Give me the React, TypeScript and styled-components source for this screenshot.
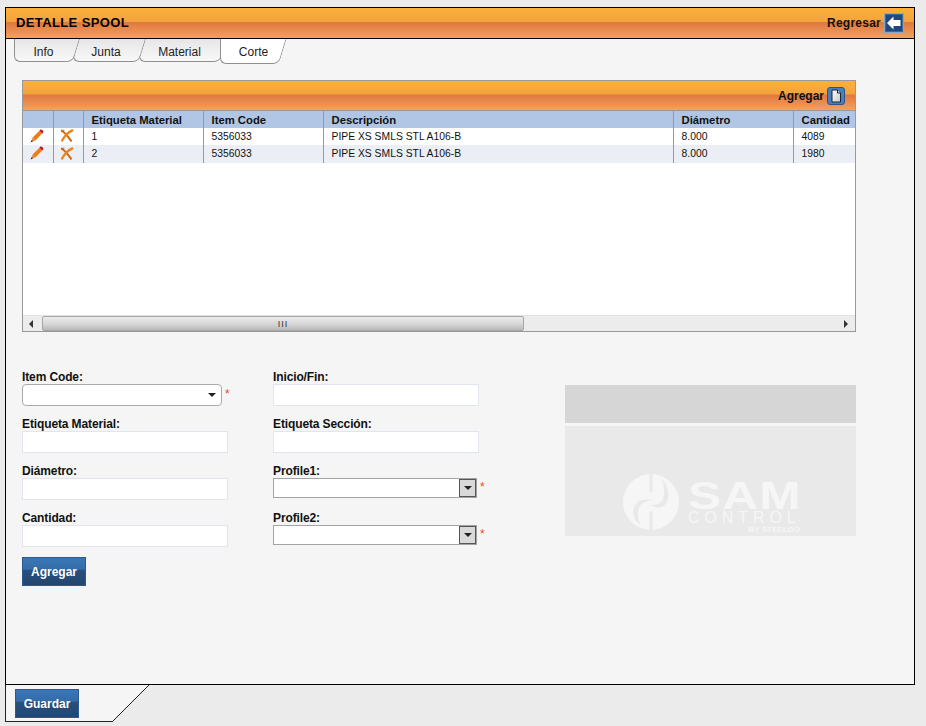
import React from "react";
import styled, { createGlobalStyle } from "styled-components";

const GlobalStyle = createGlobalStyle`
    html, body {
        margin: 0;
        padding: 0;
        background: #ebebeb;
        font-family: "Liberation Sans", Arial, sans-serif;
        color: #111;
    }
    * {
        box-sizing: border-box;
    }
`;

const orangeBar = `linear-gradient(to bottom, #fbb03b 0%, #f2a33e 46%, #e0783c 47%, #e6854a 65%, #f3a25c 100%)`;

const Page = styled.div`
    width: 926px;
    height: 726px;
    padding: 7px 0 0 5px;
`;

const Panel = styled.div`
    width: 910px;
    height: 678px;
    border: 1px solid #000;
    background: #f5f5f5;
`;

const Header = styled.div`
    height: 31px;
    border-bottom: 1px solid #000;
    background: ${orangeBar};
    display: flex;
    align-items: center;
    justify-content: space-between;
    padding: 0 10px 0 10px;
`;

const Title = styled.h1`
    margin: 0 0 2px;
    font-size: 13px;
    font-weight: bold;
    letter-spacing: 0.38px;
    color: #000;
`;

const ActionLink = styled.div<{ $wide?: boolean }>`
    display: flex;
    align-items: center;
    gap: 3px;
    font-size: 12px;
    font-weight: bold;
    letter-spacing: ${(p) => (p.$wide ? "0.25px" : "0")};
    color: #111;
`;

const TabRow = styled.div`
    display: flex;
    align-items: flex-start;
    height: 25px;
    margin: 0 0 16px 8px;
`;

const Tab = styled.div<{ $width: number; $order: number; $active?: boolean }>`
    position: relative;
    z-index: ${(p) => (p.$active ? 10 : p.$order)};
    width: ${(p) => p.$width}px;
    height: ${(p) => (p.$active ? 25 : 23)}px;
    padding-top: ${(p) => (p.$active ? 0 : 2)}px;
    display: flex;
    align-items: center;
    justify-content: center;
    font-size: 12px;
    color: #222;

    &::before,
    &::after {
        content: "";
        position: absolute;
        top: 0;
        bottom: 0;
        border-bottom: 1px solid #8f8f8f;
        background: ${(p) => (p.$active ? "#fff" : "linear-gradient(to bottom, #e6e6e6, #f8f8f8)")};
    }

    &::before {
        left: 0;
        width: 60%;
        border-left: 1px solid #8f8f8f;
        border-bottom-left-radius: 6px;
    }

    &::after {
        left: 40%;
        right: 0;
        border-right: 1px solid #8f8f8f;
        border-bottom-right-radius: 6px;
        transform: skewX(-17deg);
        transform-origin: bottom left;
    }
`;

const TabLabel = styled.span<{ $shift?: number }>`
    position: relative;
    z-index: 1;
    left: ${(p) => p.$shift ?? 0}px;
`;

const GridBox = styled.div`
    width: 834px;
    height: 252px;
    margin-left: 16px;
    border: 1px solid #999;
    background: #fff;
    display: flex;
    flex-direction: column;
`;

const GridBar = styled.div`
    height: 30px;
    flex: none;
    border-bottom: 1px solid #999;
    background: ${orangeBar};
    display: flex;
    align-items: center;
    justify-content: flex-end;
    padding-right: 10px;
`;

const GridArea = styled.div`
    flex: 1;
    overflow: hidden;
`;

const Table = styled.table`
    width: 832px;
    table-layout: fixed;
    border-collapse: collapse;
    font-size: 10.35px;
    color: #111;
`;

const Th = styled.th`
    height: 17px;
    padding: 0 0 0 8px;
    background: #b0c6e4;
    border-right: 1px solid #999;
    font-size: 11.3px;
    font-weight: bold;
    text-align: left;
    white-space: nowrap;

    &:last-child {
        border-right: 0;
    }
`;

const Row = styled.tr<{ $alt?: boolean }>`
    height: ${(p) => (p.$alt ? 18 : 17)}px;
    background: ${(p) => (p.$alt ? "#ebeff5" : "#fff")};
`;

const Td = styled.td<{ $icon?: boolean }>`
    padding: ${(p) => (p.$icon ? "0 1px 2px 0" : "1px 0 0 8px")};
    border-right: 1px solid #999;
    text-align: ${(p) => (p.$icon ? "center" : "left")};
    line-height: 1;
    white-space: nowrap;

    &:last-child {
        border-right: 0;
    }

    svg {
        display: inline-block;
        vertical-align: middle;
    }
`;

const ScrollBar = styled.div`
    height: 16px;
    flex: none;
    background: #ececec;
    border-top: 1px solid #e2e2e2;
    display: flex;
    align-items: center;
    padding: 0 6px;
`;

const ScrollArrow = styled.span<{ $right?: boolean }>`
    width: 0;
    height: 0;
    border-top: 4px solid transparent;
    border-bottom: 4px solid transparent;
    ${(p) =>
        p.$right
            ? "border-left: 4px solid #333; margin-left: auto; margin-right: 1px;"
            : "border-right: 4px solid #333; margin-left: 0;"}
`;

const ScrollThumb = styled.div`
    width: 482px;
    height: 15px;
    margin-left: 9px;
    border: 1px solid #a6a6a6;
    border-radius: 2px;
    background: linear-gradient(to bottom, #ececec, #d6d6d6 55%, #b9b9bd);
    display: flex;
    align-items: center;
    justify-content: center;
    font-size: 9px;
    letter-spacing: 1px;
    color: #333;
`;

const FormArea = styled.div`
    display: flex;
    margin: 38px 0 0 16px;
`;

const FormBlock = styled.div`
    width: 543px;
`;

const FormGrid = styled.div`
    display: grid;
    grid-template-columns: 251px 270px;
    grid-auto-rows: 36px;
    row-gap: 11px;
`;

const Field = styled.div`
    display: flex;
    flex-direction: column;
`;

const Label = styled.label`
    height: 14px;
    line-height: 14px;
    font-size: 12px;
    font-weight: bold;
    letter-spacing: -0.12px;
    color: #111;
`;

const ControlRow = styled.div`
    display: flex;
    align-items: center;
`;

const TextInput = styled.input`
    width: 206px;
    height: 22px;
    border: 1px solid #e1e5ee;
    background: #fff;
    padding: 0 4px;
    outline: none;
`;

const RoundSelect = styled.div`
    width: 200px;
    height: 22px;
    border: 1px solid #aaa;
    border-radius: 4px;
    background: #fff;
    display: flex;
    align-items: center;
    justify-content: flex-end;
    padding-right: 5px;
`;

const Caret = styled.span`
    width: 0;
    height: 0;
    border-left: 4px solid transparent;
    border-right: 4px solid transparent;
    border-top: 4px solid #222;
`;

const BoxSelect = styled.div`
    width: 204px;
    height: 20px;
    border: 1px solid #a3a3a6;
    background: #fff;
    display: flex;
    justify-content: flex-end;
`;

const BoxSelectButton = styled.span`
    width: 17px;
    height: 18px;
    border: 1px solid #555;
    background: #d9d9d9;
    display: flex;
    align-items: center;
    justify-content: center;
`;

const Required = styled.span`
    margin: 0 0 3px 3px;
    font-size: 12px;
    line-height: 1;
    color: #e0501a;
`;

const BlueButton = styled.button`
    width: 64px;
    height: 29px;
    padding: 0;
    border: 1px solid #2b5a8e;
    background: linear-gradient(to bottom, #3a76b6 0%, #356ca8 42%, #28507f 44%, #24466f 100%);
    color: #fff;
    font-family: "Liberation Sans", Arial, sans-serif;
    font-size: 12px;
    font-weight: bold;
`;

const AddButtonRow = styled.div`
    margin-top: 10px;
`;

const LogoBlock = styled.div`
    width: 291px;
    margin-top: 15px;
    display: flex;
    flex-direction: column;
    gap: 3px;
`;

const PhotoTop = styled.div`
    height: 38px;
    background: #d6d6d6;
`;

const PhotoBottom = styled.div`
    height: 110px;
    background: #e9e9e9;
    display: flex;
    align-items: flex-start;
    gap: 9px;
    padding: 48px 0 0 58px;
`;

const LogoWords = styled.div`
    width: 112px;
    display: flex;
    flex-direction: column;
    color: #f6f6f6;
    padding-top: 8px;
`;

const LogoSam = styled.div`
    height: 29px;
    line-height: 29px;
    font-size: 38px;
    font-weight: bold;
    letter-spacing: 1px;
    transform: scaleX(1.3);
    transform-origin: left center;
    white-space: nowrap;
`;

const LogoControl = styled.div`
    height: 14px;
    line-height: 14px;
    font-size: 16px;
    font-weight: normal;
    letter-spacing: 4.9px;
    white-space: nowrap;
`;

const LogoBy = styled.div`
    height: 10px;
    line-height: 10px;
    font-size: 8px;
    font-weight: bold;
    text-align: right;
    white-space: nowrap;
`;

const Footer = styled.div`
    display: flex;
    height: 37px;
`;

const FooterBody = styled.div`
    width: 107px;
    padding: 4px 0 0 9px;
    background: #f5f5f5;
    border-left: 1px solid #222;
    border-bottom: 1px solid #222;
`;

const FooterCorner = styled.div`
    width: 37px;
    height: 37px;
    background: linear-gradient(
        to bottom right,
        #f5f5f5 0,
        #f5f5f5 calc(50% - 0.5px),
        #222 calc(50% - 0.5px),
        #222 calc(50% + 0.5px),
        #ebebeb calc(50% + 0.5px)
    );
`;

const BackIcon = () => (
    <svg width="20" height="20" viewBox="0 0 20 20">
        <rect x="0.5" y="0.5" width="19" height="19" fill="#21487c" stroke="#86a6cb" />
        <rect x="1.5" y="1.5" width="17" height="17" fill="none" stroke="#3a6aa3" />
        <path d="M3 10 L9.5 3.5 V7 H16.5 V13 H9.5 V16.5 Z" fill="#fff" />
    </svg>
);

const NewIcon = () => (
    <svg width="18" height="18" viewBox="0 0 18 18">
        <defs>
            <linearGradient id="sheet" x1="0" y1="0" x2="1" y2="1">
                <stop offset="0" stopColor="#ffffff" />
                <stop offset="1" stopColor="#c9c9c9" />
            </linearGradient>
        </defs>
        <rect x="0.5" y="0.5" width="17" height="17" rx="2.5" fill="#4a7fbe" stroke="#2b5488" />
        <path d="M5 3 H10.5 L13.5 6 V15 H5 Z" fill="url(#sheet)" stroke="#14243c" />
        <path d="M10.5 3 V6 H13.5" fill="#dcdcdc" stroke="#14243c" />
    </svg>
);

const PencilIcon = () => (
    <svg width="14" height="14" viewBox="0 0 14 14">
        <path d="M2.6 8.6 L9.4 1.8 L12.2 4.6 L5.4 11.4 Z" fill="#f47a16" />
        <path d="M9.4 1.8 L10.6 0.6 Q11.4 0.2 12.2 1 L13 1.8 Q13.6 2.6 13.2 3.4 L12.2 4.6 Z" fill="#b3182c" />
        <path d="M2.6 8.6 L5.4 11.4 L1 13 Z" fill="#d98a45" />
        <path d="M1.7 11.2 L2.8 12.3 L0.6 13.4 Z" fill="#111" />
    </svg>
);

const DeleteIcon = () => (
    <svg width="13" height="13" viewBox="0.8 0 14 14" fill="none" strokeLinecap="round">
        <path d="M1.5 2 C5 3.5 8 7.5 11.5 12.5" stroke="#c9660f" strokeWidth="2.2" />
        <path d="M13 1.5 C8.5 3.5 4.5 7.5 2 12.5" stroke="#ee8418" strokeWidth="2.4" />
        <path d="M0.8 1.4 H4" stroke="#c9660f" strokeWidth="1" />
    </svg>
);

const LogoMark = () => (
    <svg width="56" height="56" viewBox="0 0 56 56">
        <circle cx="28" cy="28" r="28" fill="#f6f6f6" />
        <path d="M26.5 0 H29.5 V16 C29.5 19 27 20 26.5 17 Z" fill="#e9e9e9" />
        <path d="M26.5 39 C26.5 36 29.5 36 29.5 39 V56 H26.5 Z" fill="#e9e9e9" />
        <path
            d="M38 4 C46 12 48 24 42 31 C38 35 32 33 26 31 C33 31 38 30 40 25 C42 18 41 10 38 4 Z"
            fill="#e9e9e9"
        />
        <path
            d="M18 52 C10 46 8 36 13 30 C17 25 24 25 30 26 C23 27 18 29 16 34 C14 40 15 47 18 52 Z"
            fill="#e9e9e9"
        />
    </svg>
);

const columns = [
    { title: "", width: 30 },
    { title: "", width: 30 },
    { title: "Etiqueta Material", width: 120 },
    { title: "Item Code", width: 120 },
    { title: "Descripción", width: 350 },
    { title: "Diámetro", width: 120 },
    { title: "Cantidad", width: 62 },
];

const rows = [
    { etiqueta: "1", itemCode: "5356033", descripcion: "PIPE XS SMLS STL A106-B", diametro: "8.000", cantidad: "4089" },
    { etiqueta: "2", itemCode: "5356033", descripcion: "PIPE XS SMLS STL A106-B", diametro: "8.000", cantidad: "1980" },
];

const tabs = [
    { label: "Info", width: 59, shift: 0 },
    { label: "Junta", width: 66, shift: 0 },
    { label: "Material", width: 81, shift: 0 },
    { label: "Corte", width: 59, shift: 4, active: true },
];

const App = () => {
    return (
        <>
            <GlobalStyle />
            <Page>
                <Panel>
                    <Header>
                        <Title>DETALLE SPOOL</Title>
                        <ActionLink $wide>
                            Regresar
                            <BackIcon />
                        </ActionLink>
                    </Header>

                    <TabRow>
                        {tabs.map((tab, i) => (
                            <Tab key={tab.label} $width={tab.width} $order={tabs.length - i} $active={tab.active}>
                                <TabLabel $shift={tab.shift}>{tab.label}</TabLabel>
                            </Tab>
                        ))}
                    </TabRow>

                    <GridBox>
                        <GridBar>
                            <ActionLink>
                                Agregar
                                <NewIcon />
                            </ActionLink>
                        </GridBar>
                        <GridArea>
                            <Table>
                                <colgroup>
                                    {columns.map((col, i) => (
                                        <col key={i} width={col.width} />
                                    ))}
                                </colgroup>
                                <thead>
                                    <tr>
                                        {columns.map((col, i) => (
                                            <Th key={i}>{col.title}</Th>
                                        ))}
                                    </tr>
                                </thead>
                                <tbody>
                                    {rows.map((row, i) => (
                                        <Row key={row.etiqueta} $alt={i % 2 === 1}>
                                            <Td $icon>
                                                <PencilIcon />
                                            </Td>
                                            <Td $icon>
                                                <DeleteIcon />
                                            </Td>
                                            <Td>{row.etiqueta}</Td>
                                            <Td>{row.itemCode}</Td>
                                            <Td>{row.descripcion}</Td>
                                            <Td>{row.diametro}</Td>
                                            <Td>{row.cantidad}</Td>
                                        </Row>
                                    ))}
                                </tbody>
                            </Table>
                        </GridArea>
                        <ScrollBar>
                            <ScrollArrow />
                            <ScrollThumb>III</ScrollThumb>
                            <ScrollArrow $right />
                        </ScrollBar>
                    </GridBox>

                    <FormArea>
                        <FormBlock>
                            <FormGrid>
                                <Field>
                                    <Label>Item Code:</Label>
                                    <ControlRow>
                                        <RoundSelect>
                                            <Caret />
                                        </RoundSelect>
                                        <Required>*</Required>
                                    </ControlRow>
                                </Field>
                                <Field>
                                    <Label>Inicio/Fin:</Label>
                                    <TextInput />
                                </Field>
                                <Field>
                                    <Label>Etiqueta Material:</Label>
                                    <TextInput />
                                </Field>
                                <Field>
                                    <Label>Etiqueta Sección:</Label>
                                    <TextInput />
                                </Field>
                                <Field>
                                    <Label>Diámetro:</Label>
                                    <TextInput />
                                </Field>
                                <Field>
                                    <Label>Profile1:</Label>
                                    <ControlRow>
                                        <BoxSelect>
                                            <BoxSelectButton>
                                                <Caret />
                                            </BoxSelectButton>
                                        </BoxSelect>
                                        <Required>*</Required>
                                    </ControlRow>
                                </Field>
                                <Field>
                                    <Label>Cantidad:</Label>
                                    <TextInput />
                                </Field>
                                <Field>
                                    <Label>Profile2:</Label>
                                    <ControlRow>
                                        <BoxSelect>
                                            <BoxSelectButton>
                                                <Caret />
                                            </BoxSelectButton>
                                        </BoxSelect>
                                        <Required>*</Required>
                                    </ControlRow>
                                </Field>
                            </FormGrid>
                            <AddButtonRow>
                                <BlueButton>Agregar</BlueButton>
                            </AddButtonRow>
                        </FormBlock>
                        <LogoBlock>
                            <PhotoTop />
                            <PhotoBottom>
                                <LogoMark />
                                <LogoWords>
                                    <LogoSam>SAM</LogoSam>
                                    <LogoControl>CONTROL</LogoControl>
                                    <LogoBy>BY STEELGO</LogoBy>
                                </LogoWords>
                            </PhotoBottom>
                        </LogoBlock>
                    </FormArea>
                </Panel>
                <Footer>
                    <FooterBody>
                        <BlueButton>Guardar</BlueButton>
                    </FooterBody>
                    <FooterCorner />
                </Footer>
            </Page>
        </>
    );
};

export default App;
